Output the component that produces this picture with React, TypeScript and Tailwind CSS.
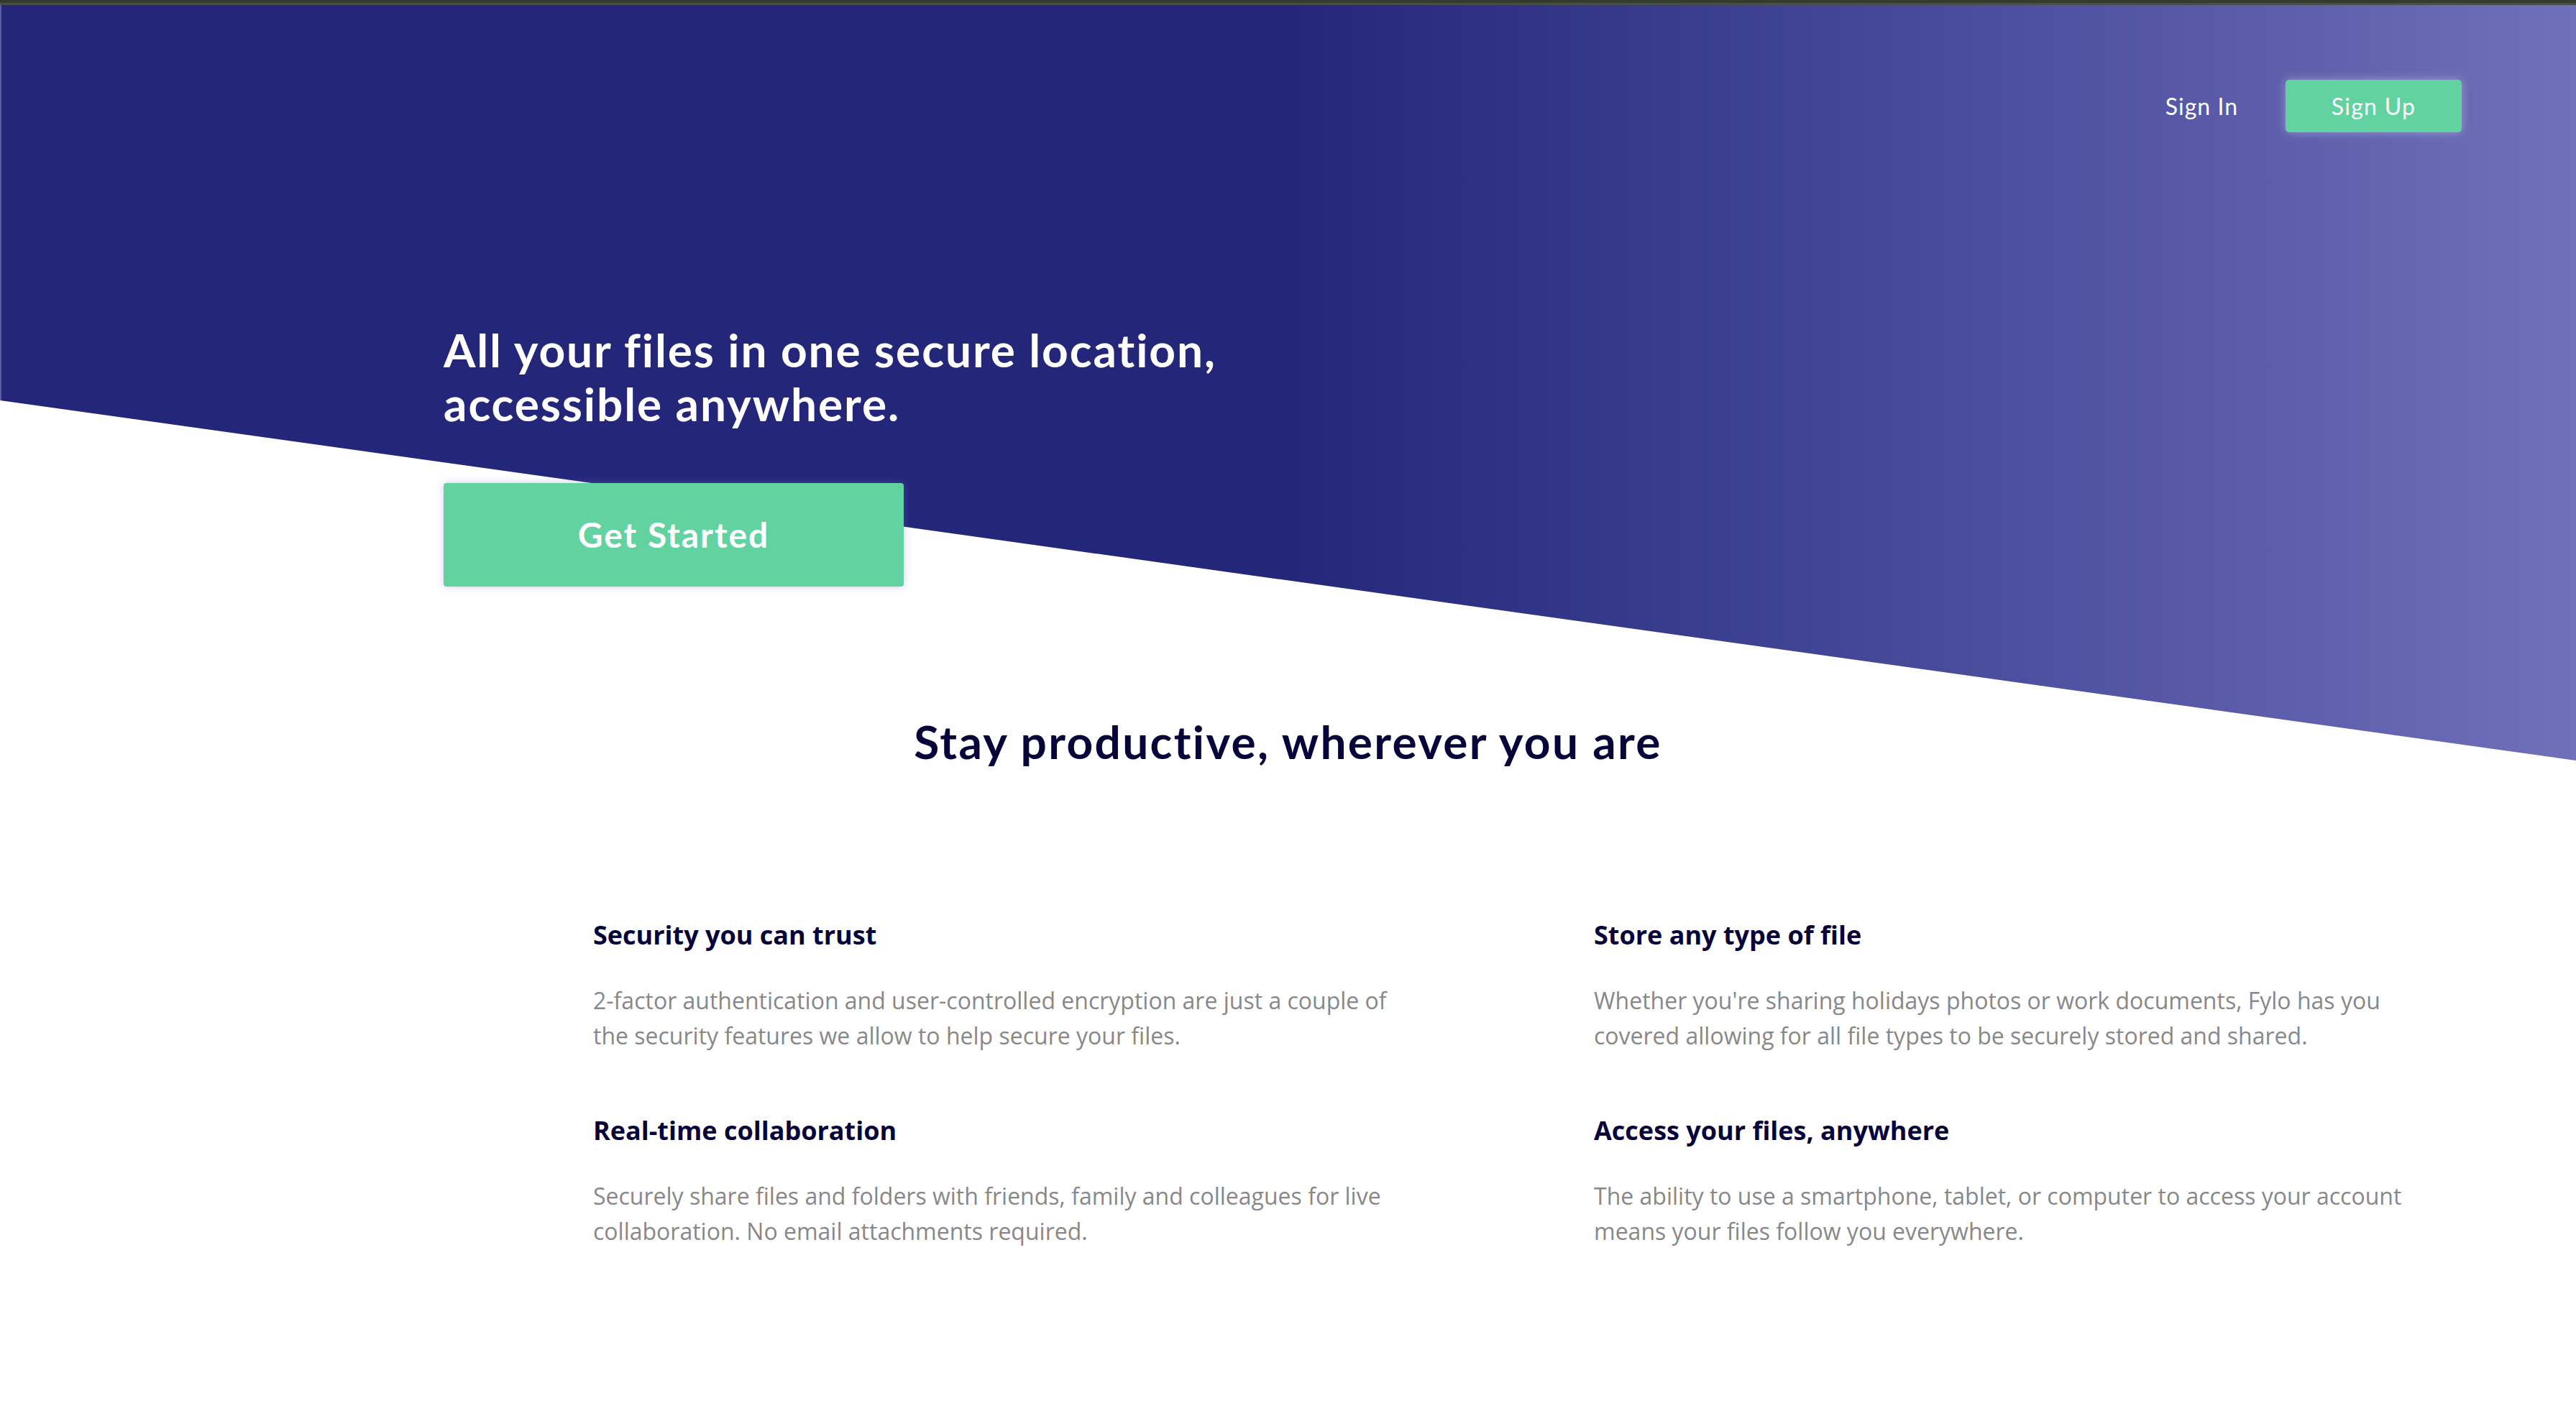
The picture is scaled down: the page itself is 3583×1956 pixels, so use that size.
const features = [
  {
    title: "Security you can trust",
    body: "2-factor authentication and user-controlled encryption are just a couple of the security features we allow to help secure your files.",
  },
  {
    title: "Store any type of file",
    body: "Whether you're sharing holidays photos or work documents, Fylo has you covered allowing for all file types to be securely stored and shared.",
  },
  {
    title: "Real-time collaboration",
    body: "Securely share files and folders with friends, family and colleagues for live collaboration. No email attachments required.",
  },
  {
    title: "Access your files, anywhere",
    body: "The ability to use a smartphone, tablet, or computer to access your account means your files follow you everywhere.",
  },
];

const heading = { fontFamily: "Lato, 'Open Sans', sans-serif" };
const body = { fontFamily: "'Open Sans', 'Liberation Sans', sans-serif" };

export default function App() {
  return (
    <div className="relative min-h-[1956px] w-full overflow-hidden bg-white">
      {/* hero background with the slanted bottom edge */}
      <div className="absolute left-0 top-0 h-[1058px] w-full bg-linear-to-r from-[#24267a] from-50% to-[#706fba] [clip-path:polygon(0_0,100%_0,100%_100%,0_557px)]">
        <div className="h-full w-[2px] bg-white/25" />
      </div>

      <div className="relative z-10">
        <div className="h-[4px] bg-[#333d2e]" />
        <div className="h-[3px] bg-[#4a4e46]" />
      </div>

      <div className="relative">
        <nav className="flex items-center justify-end gap-[66px] pr-[159px] pt-[104px]" style={heading}>
          <a className="text-[32px] tracking-[1px] text-white">Sign In</a>
          <a className="flex h-[73px] w-[245px] items-center justify-center rounded-[5px] bg-[#62d2a0] text-[32px] tracking-[1.3px] text-white shadow-[0_0_14px_rgba(255,255,255,0.35)]">
            Sign Up
          </a>
        </nav>

        <section className="ml-[617px] mt-[265px]">
          <h1 className="text-[64px] font-bold leading-[75px] tracking-[1.9px] text-white" style={heading}>
            All your files in one secure location,
            <br />
            accessible anywhere.
          </h1>
          <button
            className="mt-[73px] flex h-[144px] w-[640px] items-center justify-center rounded-[4px] bg-[#62d2a0] text-[48px] font-bold tracking-[1.9px] text-white shadow-[0_0_12px_rgba(120,120,220,0.35)]"
            style={heading}
          >
            Get Started
          </button>
        </section>

        <h2 className="mt-[178px] text-center text-[64px] font-bold leading-[75px] tracking-[2.3px] text-[#070439]" style={heading}>
          Stay productive, wherever you are
        </h2>

        <div className="ml-[825px] mt-[209px] grid grid-cols-[1135px_1135px] gap-x-[257px] gap-y-[85px]" style={body}>
          {features.map((f) => (
            <div key={f.title}>
              <h3 className="text-[36px] font-bold leading-[45px] text-[#070439]">{f.title}</h3>
              <p className="mt-[44px] text-[32px] leading-[49px] text-[#888888]">{f.body}</p>
            </div>
          ))}
        </div>
      </div>
    </div>
  );
}
